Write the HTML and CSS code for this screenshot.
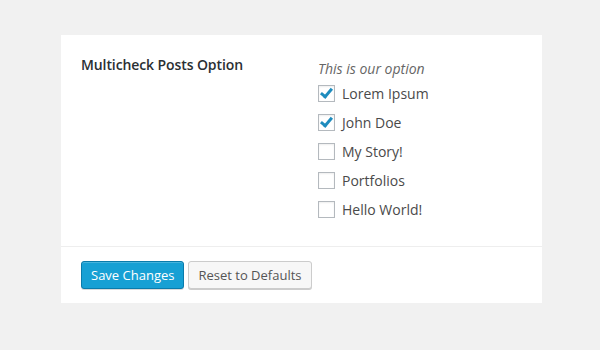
FILE: index.html
```html
<!DOCTYPE html>
<html lang="en">
<head>
    <meta charset="UTF-8">
    <title>Multicheck Posts Option</title>
    <link rel="stylesheet" href="styles.css">
</head>
<body>
    <form class="panel">
        <div class="option-row">
            <div class="option-label">Multicheck Posts Option</div>
            <div class="option-field">
                <p class="option-desc">This is our option</p>
                <ul class="check-list">
                    <li><label class="check"><input type="checkbox" checked><span class="box"></span>Lorem Ipsum</label></li>
                    <li><label class="check"><input type="checkbox" checked><span class="box"></span>John Doe</label></li>
                    <li><label class="check"><input type="checkbox"><span class="box"></span>My Story!</label></li>
                    <li><label class="check"><input type="checkbox"><span class="box"></span>Portfolios</label></li>
                    <li><label class="check"><input type="checkbox"><span class="box"></span>Hello World!</label></li>
                </ul>
            </div>
        </div>
        <div class="actions">
            <button type="button" class="btn btn-primary">Save Changes</button>
            <button type="button" class="btn">Reset to Defaults</button>
        </div>
    </form>
</body>
</html>
```

FILE: styles.css
```css
body {
    margin: 0;
    padding: 35px 58px 47px 61px;
    background-color: #f1f1f1;
    font-family: "Open Sans", sans-serif;
    font-size: 14px;
    color: #444;
}
.panel {
    width: 481px;
    background-color: #fff;
}
.option-row {
    display: grid;
    grid-template-columns: 237px 1fr;
    padding: 20px 20px 22px 20px;
    border-bottom: 1px solid #eee;
}
.option-label {
    font-weight: 600;
    font-size: 14px;
    letter-spacing: -0.1px;
    color: #2a2f33;
    line-height: 22px;
    margin-top: -1px;
}
.option-desc {
    margin: 4px 0 0;
    font-style: italic;
    color: #666;
    line-height: 20px;
}
.check-list {
    list-style: none;
    margin: 0;
    padding: 0;
}
.check-list li {
    height: 29px;
}
.check {
    display: flex;
    align-items: center;
    height: 29px;
    color: #4a4a4a;
}
.check input {
    display: none;
}
.box {
    width: 15px;
    height: 15px;
    border: 1px solid #b4b9be;
    box-shadow: inset 0 1px 2px rgba(0, 0, 0, 0.07);
    margin-right: 7px;
    position: relative;
}
.check input:checked + .box::after {
    content: "";
    position: absolute;
    left: 4px;
    top: 0px;
    width: 4px;
    height: 9px;
    border: solid #1e8cbe;
    border-width: 0 3px 3px 0;
    transform: rotate(40deg);
}
.actions {
    display: flex;
    gap: 4px;
    padding: 14px 20px 14px 20px;
}
.btn {
    font-family: "Open Sans", sans-serif;
    font-size: 13px;
    height: 28px;
    padding: 0 9px;
    border: 1px solid #ccc;
    border-radius: 3px;
    background-color: #f7f7f7;
    color: #555;
    box-shadow: 0 1px 0 #ccc;
}
.btn-primary {
    background-color: #17a0d4;
    border-color: #0a7bab;
    color: #fff;
    box-shadow: inset 0 1px 0 rgba(120, 200, 230, 0.5), 0 1px 0 rgba(0, 0, 0, 0.15);
}
```
